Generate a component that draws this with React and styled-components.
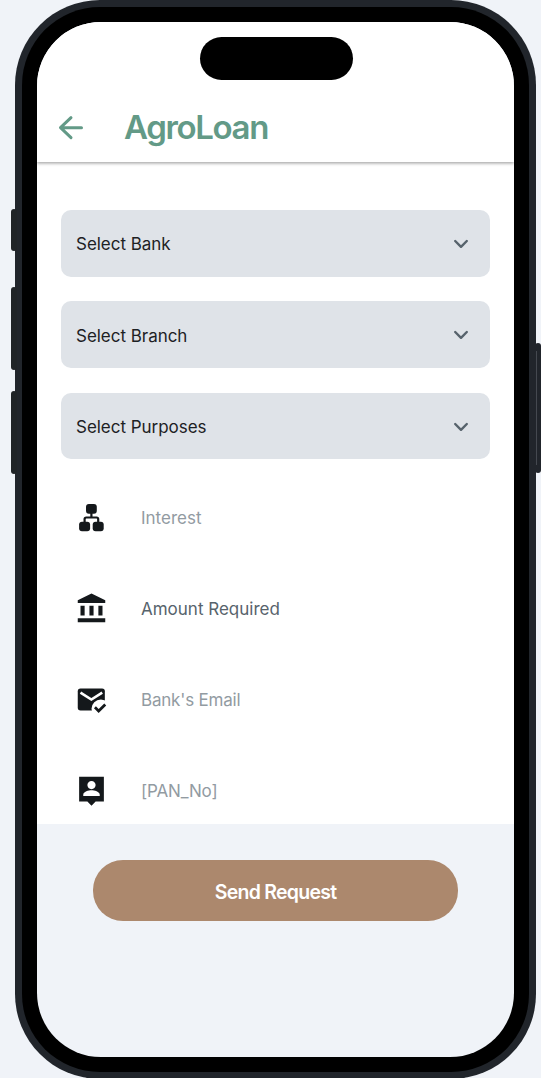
import React from "react";
import styled, { createGlobalStyle } from "styled-components";
import { MdAccountBalance } from "react-icons/md";

const GlobalStyle = createGlobalStyle`
  * { box-sizing: border-box; }
  html, body { margin: 0; background: #f0f3f8; overflow: hidden; }
  body { font-family: Inter, "Liberation Sans", sans-serif; }
`;

const Page = styled.main`
  height: 1078px;
  overflow: hidden;
  padding-left: 15px;
`;

const Device = styled.div`
  position: relative;
  width: 521px;
  height: 1079px;
  padding: 7px;
  border-radius: 85px;
  background: #21252b;
`;

const Bezel = styled.div`
  height: 100%;
  padding: 15px;
  border-radius: 78px;
  background: #000;
`;

const Screen = styled.div`
  height: 100%;
  display: flex;
  flex-direction: column;
  border-radius: 64px;
  overflow: hidden;
  background: #f0f3f8;
`;

const SideButton = styled.span`
  position: absolute;
  ${(p) => (p.$side === "left" ? "left: -4px" : "right: -5px")};
  top: ${(p) => p.$top}px;
  width: 6px;
  height: ${(p) => p.$height}px;
  border-radius: 3px;
  background: #202427;
  ${(p) => p.$side === "right" && "background: linear-gradient(#454950, #454950) 1px 8px / 1px calc(100% - 16px) no-repeat #21252b;"}
`;

const Island = styled.div`
  position: absolute;
  left: 184.6px;
  top: 36.5px;
  width: 153px;
  height: 43.5px;
  border-radius: 22px;
  background: #000;
`;

const Header = styled.header`
  position: relative;
  flex: none;
  height: 140px;
  display: flex;
  align-items: flex-end;
  padding: 0 0 13px 19px;
  gap: 39px;
  background: #fff;
  box-shadow: 0 1.5px 3px rgba(0, 0, 0, 0.35);
`;

const BackButton = styled.button`
  display: flex;
  padding: 0;
  margin-bottom: 7px;
  border: 0;
  background: none;
  color: #639a87;
`;

const Title = styled.h1`
  margin: 0;
  font-size: 33px;
  line-height: 44px;
  font-weight: 600;
  letter-spacing: -1.35px;
  color: #639a87;
`;

const Form = styled.section`
  flex: none;
  height: 662px;
  padding-top: 48.4px;
  background: #fff;
`;

const Selects = styled.div`
  display: flex;
  flex-direction: column;
  gap: 24.3px;
  padding: 0 24px;
`;

const Select = styled.button`
  display: flex;
  align-items: center;
  justify-content: space-between;
  height: 66.8px;
  padding: 1.3px 18px 0 15px;
  border: 0;
  border-radius: 10px;
  background: #dfe3e8;
  font: 400 17px/24px Inter, sans-serif;
  letter-spacing: -0.03px;
  color: #1d2124;

  svg {
    margin-bottom: 0.2px;
  }
`;

const Fields = styled.div`
  padding: 12.7px 0 0 38px;
`;

const Field = styled.div`
  display: flex;
  align-items: center;
  gap: 33px;
  height: 91.1px;
  color: #14181b;
`;

const FieldLabel = styled.span`
  font-size: 17px;
  line-height: 24px;
  font-weight: 400;
  letter-spacing: ${(p) => p.$tracking ?? 0}px;
  color: ${(p) => (p.$strong ? "#57636c" : "#929ba2")};
`;

const Actions = styled.footer`
  display: flex;
  justify-content: center;
  padding-top: 36.4px;
`;

const Submit = styled.button`
  width: 365px;
  height: 60.8px;
  padding: 2px 0 0;
  border: 0;
  border-radius: 30px;
  background: #ac886d;
  color: #fff;
  font: 600 19.5px/24px Inter, sans-serif;
  letter-spacing: -0.74px;
`;

const ArrowIcon = () => (
  <svg width="29" height="29" viewBox="0 0 29 29" fill="none" stroke="currentColor" strokeWidth="3" strokeLinecap="round" strokeLinejoin="round">
    <path d="M25.5 14.7H5M15 4.7L4.5 14.7L15 24.7" />
  </svg>
);

const ChevronIcon = () => (
  <svg width="22" height="22" viewBox="0 0 22 22" fill="none" stroke="#57636c" strokeWidth="2.4" strokeLinecap="round" strokeLinejoin="round">
    <path d="M5.2 8L11 13.8L16.8 8" />
  </svg>
);

const HierarchyIcon = () => (
  <svg width="33" height="33" viewBox="0 0 33 33" fill="currentColor">
    <rect x="11" y="2.9" width="10.8" height="9.8" rx="2.9" />
    <rect x="4.1" y="20.7" width="11" height="9.5" rx="2.9" />
    <rect x="17.7" y="20.7" width="11" height="9.5" rx="2.9" />
    <path d="M16.4 11V16.5M9.6 22V18Q9.6 16.5 11.2 16.5H21.6Q23.2 16.5 23.2 18V22" fill="none" stroke="currentColor" strokeWidth="2.2" />
  </svg>
);

const EmailCheckIcon = () => (
  <svg width="33" height="33" viewBox="0 0 24 24">
    <rect x="2" y="4" width="19.7" height="16" rx="2" fill="currentColor" />
    <path d="M4 7L11.9 12L19.8 7" fill="none" stroke="#fff" strokeWidth="1.9" />
    <circle cx="18.8" cy="18.8" r="6.8" fill="#fff" />
    <path d="M14.5 17.7L17.2 20.4L22 15.6" fill="none" stroke="currentColor" strokeWidth="2" />
  </svg>
);

const PersonPinIcon = () => (
  <svg width="33" height="33" viewBox="0 0 24 24" fill="currentColor">
    <path fillRule="evenodd" d="M21 2H3v18h6l3 3 3-3h6V2zm-9 3c1.66 0 3 1.34 3 3s-1.34 3-3 3-3-1.34-3-3 1.34-3 3-3zm6 11H6v-1c0-2 4-3.1 6-3.1s6 1.1 6 3.1v1z" />
  </svg>
);

const fields = [
  { label: "Interest", icon: <HierarchyIcon /> },
  { label: "Amount Required", icon: <MdAccountBalance size={33} />, strong: true },
  { label: "Bank's Email", icon: <EmailCheckIcon />, tracking: -0.2 },
  { label: "[PAN_No]", icon: <PersonPinIcon />, tracking: -0.15 },
];

export default function App() {
  return (
    <Page>
      <GlobalStyle />
      <Device>
        <SideButton $side="left" $top={209} $height={42} />
        <SideButton $side="left" $top={287} $height={83} />
        <SideButton $side="left" $top={391} $height={83} />
        <SideButton $side="right" $top={343} $height={130} />
        <Bezel>
          <Screen>
            <Header>
              <BackButton aria-label="Back"><ArrowIcon /></BackButton>
              <Title>AgroLoan</Title>
            </Header>
            <Form>
              <Selects>
                {["Select Bank", "Select Branch", "Select Purposes"].map((label) => (
                  <Select key={label}>{label}<ChevronIcon /></Select>
                ))}
              </Selects>
              <Fields>
                {fields.map((f) => (
                  <Field key={f.label}>
                    {f.icon}
                    <FieldLabel $strong={f.strong} $tracking={f.tracking}>{f.label}</FieldLabel>
                  </Field>
                ))}
              </Fields>
            </Form>
            <Actions><Submit>Send Request</Submit></Actions>
          </Screen>
        </Bezel>
        <Island />
      </Device>
    </Page>
  );
}
